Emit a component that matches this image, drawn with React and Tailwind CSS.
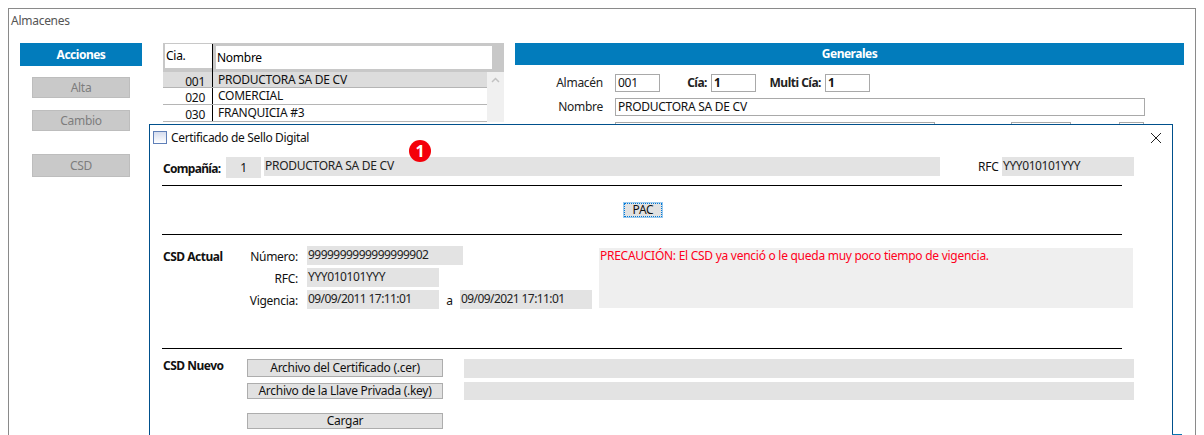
const ui = { fontFamily: '"Noto Sans", "Open Sans", sans-serif' }

const ROWS = [
  { code: '001', name: 'PRODUCTORA SA DE CV', selected: true, height: 'h-[16px]' },
  { code: '020', name: 'COMERCIAL', height: 'h-[17px]' },
  { code: '030', name: 'FRANQUICIA #3', height: 'h-[17px]' },
]

function Action({ label, className }) {
  return (
    <div className={`mx-3 flex items-center justify-center bg-[#c9c9c9] border border-[#bdbdbd] text-[#7d7d7d] text-xs ${className}`}>
      {label}
    </div>
  )
}

function Input({ children, bold, className }) {
  return (
    <div className={`h-[18px] border border-[#a9a9a9] bg-white pl-[2px] text-xs leading-[16px] text-[#111] ${bold ? 'font-bold' : ''} ${className}`}>
      {children}
    </div>
  )
}

function Gray({ children, className }) {
  return <div className={`bg-[#e3e3e3] text-xs text-[#222] pl-[1px] ${className}`}>{children}</div>
}

function Btn({ children, className }) {
  return (
    <div className={`w-[196px] flex items-center justify-center bg-[#e1e1e1] border border-[#adadad] text-xs text-[#111] ${className}`}>
      {children}
    </div>
  )
}

function Warehouses() {
  return (
    <div className="mt-[25px] flex text-xs">
      {/* Acciones */}
      <div className="ml-[11px] w-[122px] flex flex-col">
        <div className="h-[23px] bg-[#027cbc] text-white font-bold tracking-[-0.5px] flex items-center justify-center">Acciones</div>
        <Action label="Alta" className="mt-[11px] h-[21px]" />
        <Action label="Cambio" className="mt-[12px] h-[21px]" />
        <Action label="CSD" className="mt-[23px] h-[23px]" />
      </div>

      {/* Lista */}
      <div className="ml-[21px] w-[341px]">
        <div className="h-[29px] bg-[#c8c8c8] flex pt-[1px] pl-[2px] pr-[12px]">
          <div className="w-[47px] h-[24px] bg-white pl-[1px] leading-[24px]">Cia.</div>
          <div className="w-[1px] h-[28px] bg-black" />
          <div className="ml-[3px] mt-[2px] flex-1 h-[23px] bg-white pl-[1px] leading-[24px]">Nombre</div>
        </div>
        <div className="flex">
          <div className="w-[324px]">
            {ROWS.map(({ code, name, selected, height }) => (
              <div key={code} className={`${height} flex border-b border-[#b5b5b5] leading-[16px] text-[#111] ${selected ? 'bg-[#dcdcdc]' : 'bg-white'}`}>
                <div className="w-[49px] pr-[7px] text-right leading-[19px]">{code}</div>
                <div className="w-[1px] bg-black" />
                <div className="pl-[5px] leading-[16px]">{name}</div>
              </div>
            ))}
          </div>
          <div className="w-[17px] bg-[#f0f0f0] flex justify-center pt-[5px]">
            <svg width="9" height="6" viewBox="0 0 9 6" fill="none" stroke="#c2c2c2" strokeWidth="1.5"><path d="M1 5l3.5-3.5L8 5" /></svg>
          </div>
        </div>
      </div>

      {/* Generales */}
      <div className="ml-[11px] w-[669px]">
        <div className="h-[22px] bg-[#027cbc] text-white font-bold tracking-[-0.5px] flex items-center justify-center">Generales</div>
        <div className="mt-[9px] flex items-center">
          <div className="w-[88px] text-right text-[#222]">Almacén</div>
          <Input className="ml-[12px] w-[45px]">001</Input>
          <div className="w-[47px] text-right font-bold tracking-[-0.5px] text-[#222]">Cía:</div>
          <Input bold className="ml-[4px] w-[45px]">1</Input>
          <div className="w-[65px] text-right font-bold tracking-[-0.5px] text-[#222]">Multi Cía:</div>
          <Input bold className="ml-[4px] w-[45px]">1</Input>
        </div>
        <div className="mt-[6px] flex items-center">
          <div className="w-[88px] text-right text-[#222]">Nombre</div>
          <Input className="ml-[12px] w-[530px]">PRODUCTORA SA DE CV</Input>
        </div>
        <div className="mt-[6px] flex">
          <Input className="ml-[100px] w-[320px]" />
          <Input className="ml-[76px] w-[60px]" />
          <Input className="ml-[48px] w-[25px]" />
        </div>
      </div>
    </div>
  )
}

function Certificate() {
  return (
    <div className="absolute left-[149px] top-[124px] w-[1024px] h-[311px] bg-white border border-b-0 border-[#00508c] text-xs text-[#111]">
      {/* Titulo */}
      <div className="h-[25px] flex items-center pl-[3px]">
        <div className="w-[14px] h-[13px] border border-[#5f7fb8] bg-gradient-to-b from-[#d5dcee] to-white" />
        <div className="ml-[4px] text-xs tracking-[-0.35px]">Certificado de Sello Digital</div>
        <svg className="ml-auto mr-[10px]" width="12" height="12" viewBox="0 0 12 12" stroke="#222" strokeWidth="1"><path d="M1 1l10 10M11 1L1 11" /></svg>
      </div>

      {/* Compania */}
      <div className="mt-[7px] ml-[13px] flex items-start">
        <div className="w-[63px] h-[21px] font-bold tracking-[-0.7px] leading-[23px]">Compañía:</div>
        <div className="w-[35px] h-[21px] bg-[#e3e3e3] text-center leading-[21px]">1</div>
        <Gray className="ml-[3px] w-[676px] h-[19px] leading-[18px]">PRODUCTORA SA DE CV</Gray>
        <div className="ml-[38px] w-[24px] leading-[19px]">RFC</div>
        <Gray className="w-[132px] h-[19px] leading-[18px] tracking-[-0.4px]">YYY010101YYY</Gray>
      </div>
      <div className="ml-[12px] w-[960px] mt-[7px] h-[1px] bg-black" />

      {/* PAC */}
      <div className="mt-[17px] ml-[474px] w-[38px] h-[14px] bg-[#e1e1e1] border border-dotted border-[#0078d7] outline outline-[#0078d7]/40 flex items-center justify-center">PAC</div>
      <div className="ml-[12px] w-[960px] mt-[17px] h-[1px] bg-black" />

      {/* CSD Actual */}
      <div className="mt-[11px] ml-[13px] flex items-start">
        <div className="w-[85px] font-bold tracking-[-0.5px] pt-[3px]">CSD Actual</div>
        <div className="flex flex-col gap-[3px]">
          <div className="flex items-start h-[19px]">
            <div className="w-[50px] text-right leading-[22px]">Número:</div>
            <Gray className="ml-[9px] w-[156px] h-[19px] leading-[18px] tracking-[-0.53px]">9999999999999999902</Gray>
          </div>
          <div className="flex items-start h-[19px]">
            <div className="w-[50px] text-right leading-[22px]">RFC:</div>
            <Gray className="ml-[9px] w-[132px] h-[19px] leading-[18px] tracking-[-0.4px]">YYY010101YYY</Gray>
          </div>
          <div className="flex items-start h-[19px]">
            <div className="w-[50px] text-right leading-[22px]">Vigencia:</div>
            <Gray className="ml-[9px] w-[132px] h-[19px] leading-[18px] tracking-[-0.58px]">09/09/2011 17:11:01</Gray>
            <div className="w-[21px] text-center leading-[22px]">a</div>
            <Gray className="w-[132px] h-[19px] leading-[18px] tracking-[-0.58px]">09/09/2021 17:11:01</Gray>
          </div>
        </div>
        <div className="ml-[7px] mt-[2px] w-[534px] h-[60px] bg-[#efefef] pl-[1px] text-[#ff0020] leading-[16px]">
          PRECAUCIÓN: El CSD ya venció o le queda muy poco tiempo de vigencia.
        </div>
      </div>
      <div className="ml-[12px] w-[960px] mt-[39px] h-[1px] bg-black" />

      {/* CSD Nuevo */}
      <div className="mt-[10px] ml-[13px] flex items-start">
        <div className="w-[84px] font-bold tracking-[-0.5px] leading-[14px]">CSD Nuevo</div>
        <div className="flex flex-col">
          <Btn className="h-[18px]">Archivo del Certificado (.cer)</Btn>
          <Btn className="mt-[6px] h-[16px]">Archivo de la Llave Privada (.key)</Btn>
          <Btn className="mt-[14px] h-[16px]">Cargar</Btn>
        </div>
        <div className="ml-[21px] flex flex-col gap-[4px]">
          <Gray className="w-[670px] h-[19px]" />
          <Gray className="w-[670px] h-[18px]" />
        </div>
      </div>
    </div>
  )
}

export default function App() {
  return (
    <div style={ui} className="relative w-[1204px] h-[435px] overflow-hidden bg-white tracking-[-0.27px]">
      <div className="ml-2 pt-2">
        <div className="w-[1188px] h-[427px] border border-b-0 border-[#8a8a8a]">
          <div className="pl-[2px] pt-[4px] h-[9px] text-xs text-[#555] leading-[16px]">Almacenes</div>
          <Warehouses />
        </div>
      </div>
      <Certificate />
      {/* Marcador */}
      <div className="absolute left-[409px] top-[140px] w-[22px] h-[22px] rounded-full bg-[#f40009] text-white font-bold text-[16px] flex items-center justify-center">1</div>
      <div className="absolute left-[1172px] top-[434px] w-[10px] h-[1px] bg-[#0a78b4]" />
    </div>
  )
}
